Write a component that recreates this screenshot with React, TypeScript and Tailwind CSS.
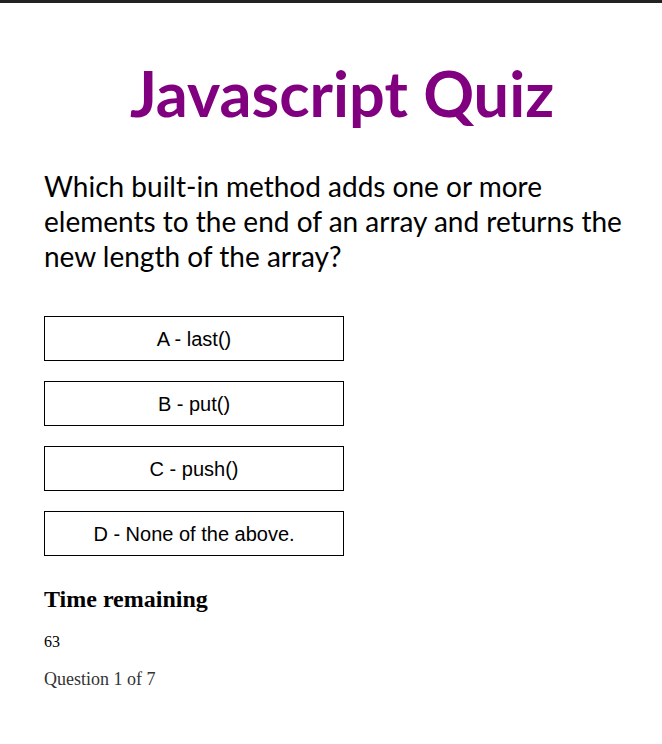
import React from 'react';

const answers = ['A - last()', 'B - put()', 'C - push()', 'D - None of the above.'];

export default function App() {
  return (
    <div className="min-h-[744px] bg-white border-t-[3px] border-[#222222]">
      <div className="pl-[44px] pr-[22px]">
        <h1 className="pt-[52px] text-center text-[63px] leading-[76px] font-bold text-[#800080] font-['Lato',sans-serif]">
          Javascript Quiz
        </h1>
        <p className="mt-[38px] max-w-[590px] text-[28px] leading-[35px] text-black font-['Lato',sans-serif]">
          Which built-in method adds one or more elements to the end of an array and returns the new length of the array?
        </p>
        <div className="mt-[42px] flex flex-col gap-[20px]">
          {answers.map((a) => (
            <button
              key={a}
              className="w-[300px] h-[45px] border border-black bg-white text-[20px] text-black font-['Liberation_Sans',Arial,sans-serif]"
            >
              {a}
            </button>
          ))}
        </div>
        <h2 className="mt-[28px] text-[24px] leading-[30px] font-bold text-black font-['Liberation_Serif','Times_New_Roman',serif]">
          Time remaining
        </h2>
        <p className="mt-[18px] text-[16px] leading-[20px] text-black font-['Liberation_Serif','Times_New_Roman',serif]">
          63
        </p>
        <p className="mt-[16px] text-[18px] leading-[22px] text-[#333333] font-['Liberation_Serif','Times_New_Roman',serif]">
          Question 1 of 7
        </p>
      </div>
    </div>
  );
}
